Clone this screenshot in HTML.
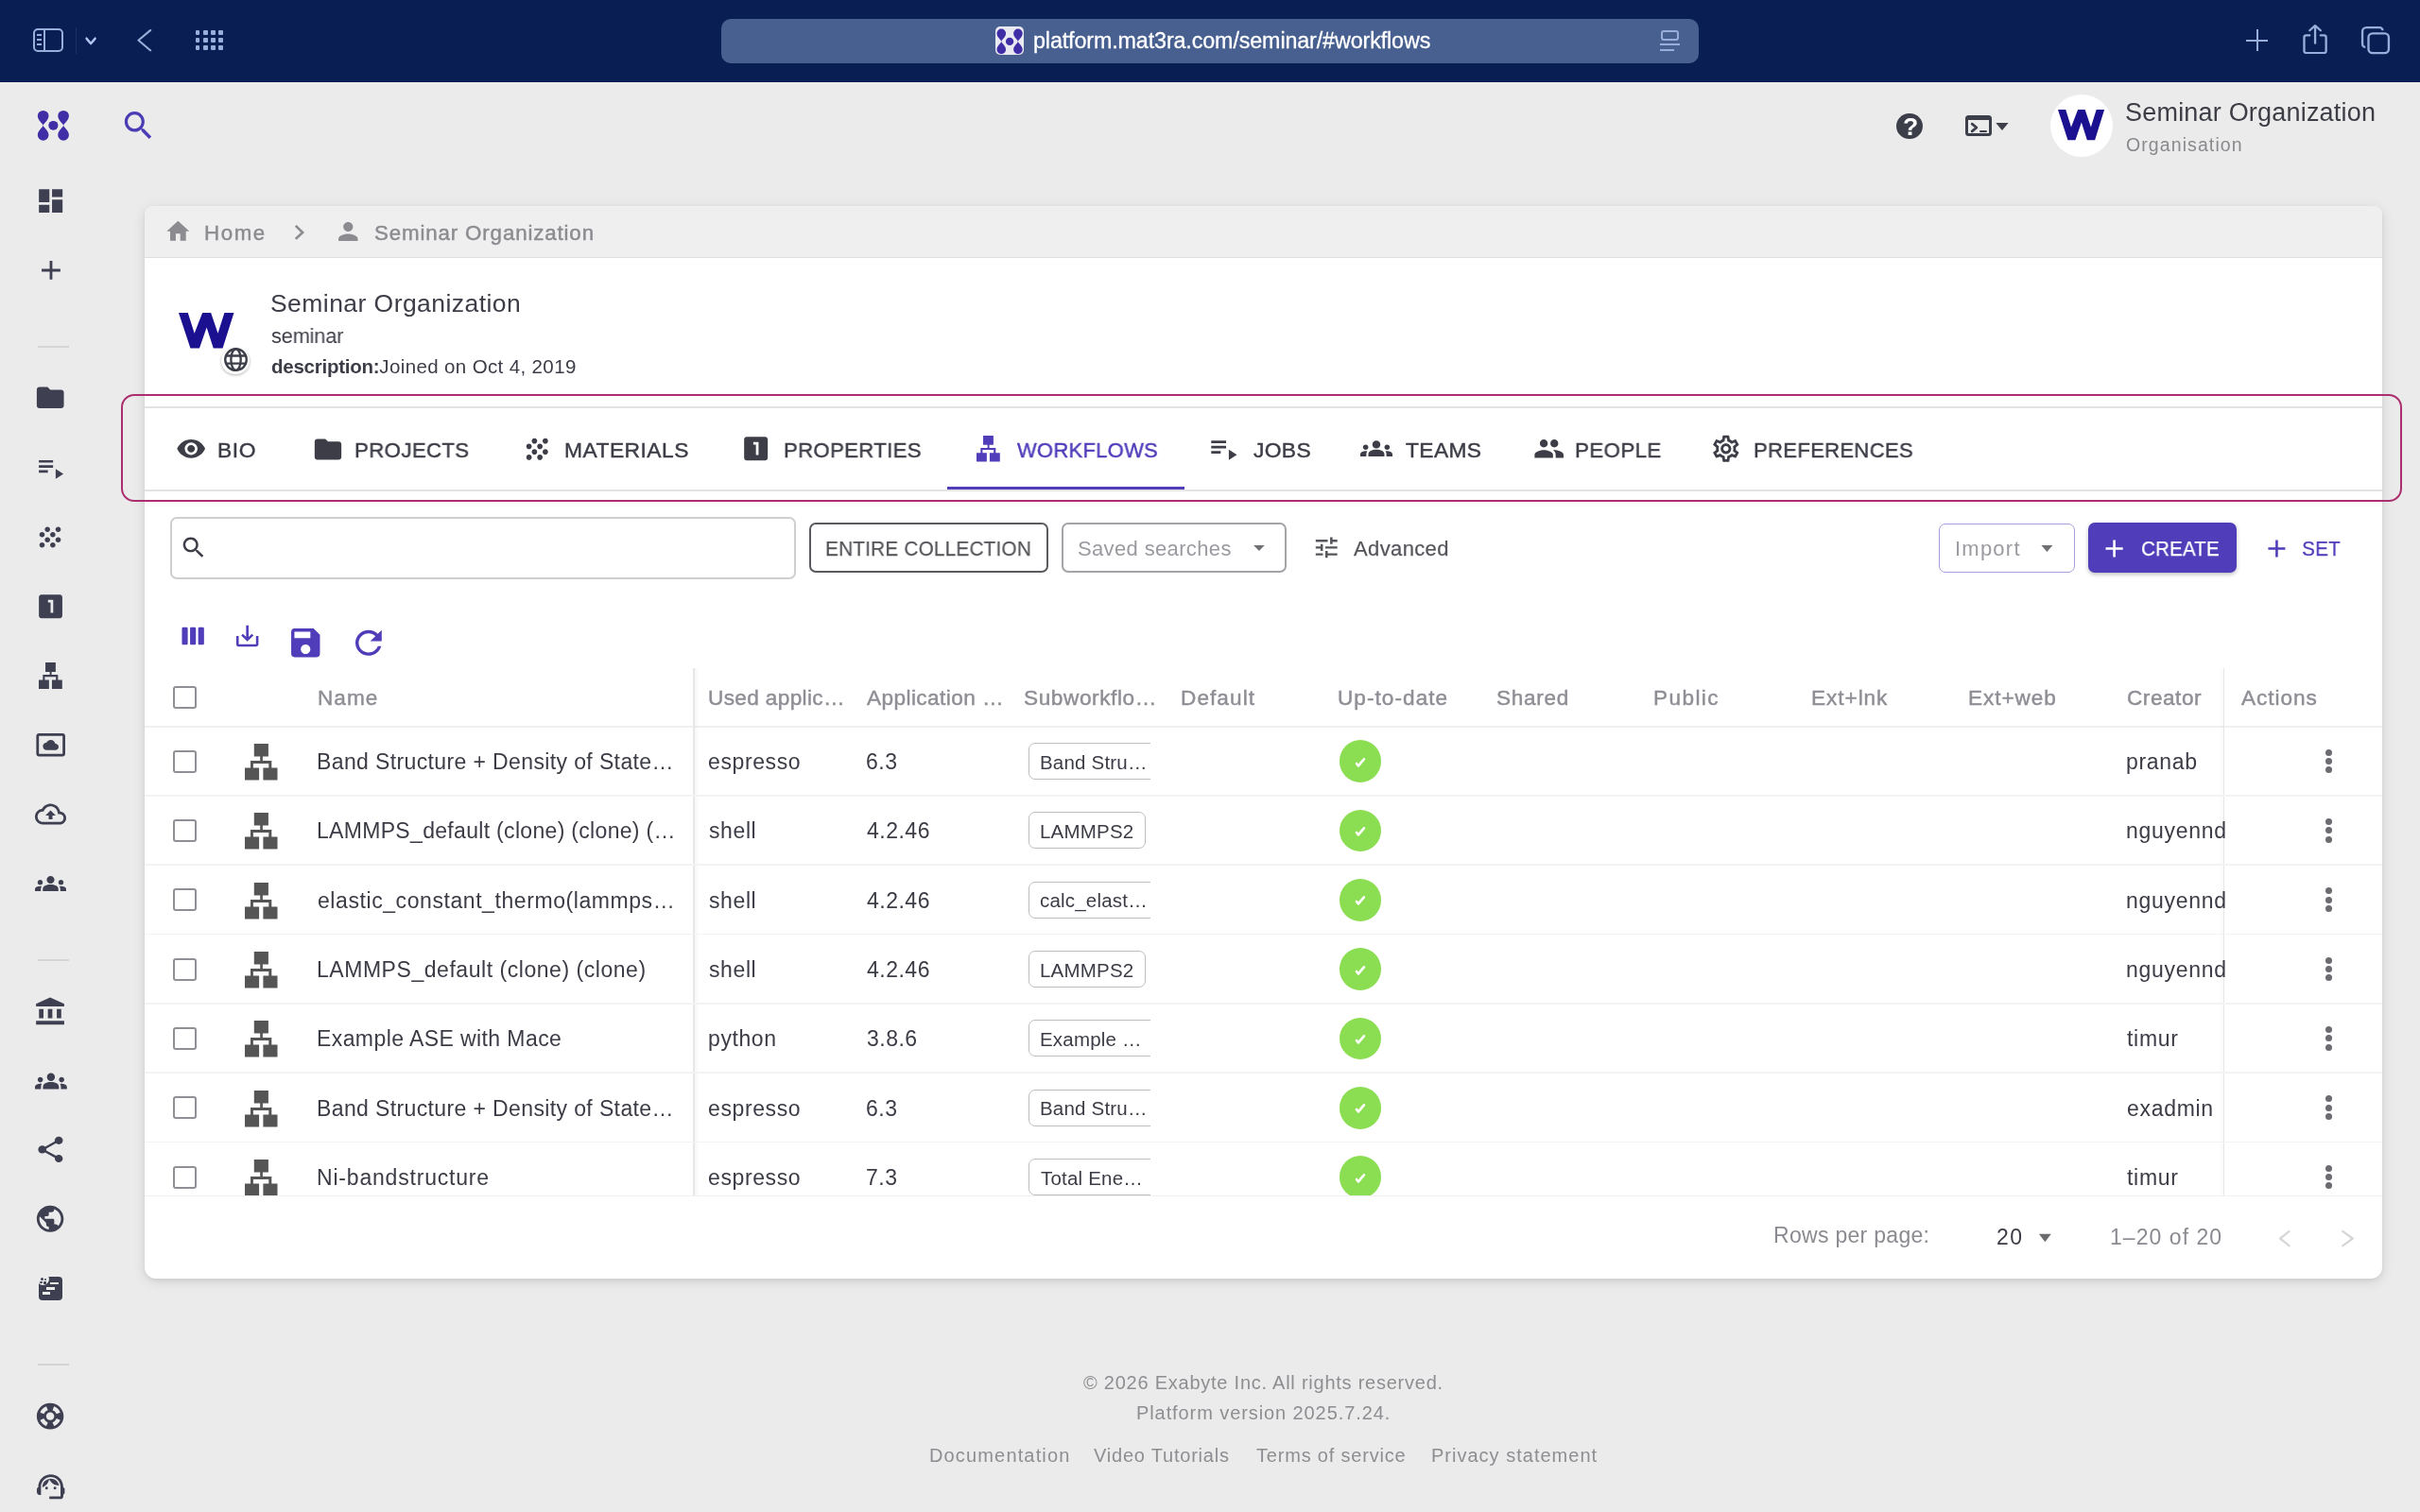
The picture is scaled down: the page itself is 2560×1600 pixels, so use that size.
<!DOCTYPE html><html><head><meta charset="utf-8"><title>Seminar Organization - Workflows</title><style>
html,body{margin:0;padding:0;width:2560px;height:1600px;overflow:hidden;background:#ebebeb;font-family:"Liberation Sans",sans-serif;}
.t{position:absolute;white-space:pre;will-change:transform;}.b{position:absolute;box-sizing:border-box;}.i{position:absolute;overflow:visible;}
.m{-webkit-text-stroke:0.25px currentColor;}.m2{-webkit-text-stroke:0.45px currentColor;}
</style></head><body>
<div class="b" style="left:0.00px;top:0.00px;width:2560.00px;height:87.00px;background:#091e52"></div>
<div class="b" style="left:35.00px;top:30.00px;width:32.00px;height:25.00px;border:2px solid #9aaedb;border-radius:5px"></div>
<div class="b" style="left:46.00px;top:31.00px;width:2.00px;height:23.00px;background:#9aaedb"></div>
<div class="b" style="left:39.00px;top:36.00px;width:5.00px;height:1.60px;background:#9aaedb"></div>
<div class="b" style="left:39.00px;top:41.00px;width:5.00px;height:1.60px;background:#9aaedb"></div>
<div class="b" style="left:39.00px;top:46.00px;width:5.00px;height:1.60px;background:#9aaedb"></div>
<div class="b" style="left:79.50px;top:29.00px;width:1.00px;height:28.00px;background:#1d3063"></div>
<svg class="i" style="left:90.22px;top:38.56px;width:12.16px;height:8.89px;" viewBox="0 0 16 10" preserveAspectRatio="none"><path d="M2 2 L8 8 L14 2" fill="none" stroke="#b4c6f2" stroke-width="3" stroke-linecap="round" stroke-linejoin="round"/></svg>
<svg class="i" style="left:142.69px;top:29.62px;width:18.46px;height:25.35px;" viewBox="0 0 16 26" preserveAspectRatio="none"><path d="M14 2 L3 13 L14 24" fill="none" stroke="#9aaedb" stroke-width="2" stroke-linecap="round" stroke-linejoin="round"/></svg>
<div class="b" style="left:206.60px;top:32.00px;width:4.80px;height:4.80px;background:#9aaedb;border-radius:1px"></div>
<div class="b" style="left:214.80px;top:32.00px;width:4.80px;height:4.80px;background:#9aaedb;border-radius:1px"></div>
<div class="b" style="left:223.00px;top:32.00px;width:4.80px;height:4.80px;background:#9aaedb;border-radius:1px"></div>
<div class="b" style="left:231.20px;top:32.00px;width:4.80px;height:4.80px;background:#9aaedb;border-radius:1px"></div>
<div class="b" style="left:206.60px;top:40.20px;width:4.80px;height:4.80px;background:#9aaedb;border-radius:1px"></div>
<div class="b" style="left:214.80px;top:40.20px;width:4.80px;height:4.80px;background:#9aaedb;border-radius:1px"></div>
<div class="b" style="left:223.00px;top:40.20px;width:4.80px;height:4.80px;background:#9aaedb;border-radius:1px"></div>
<div class="b" style="left:231.20px;top:40.20px;width:4.80px;height:4.80px;background:#9aaedb;border-radius:1px"></div>
<div class="b" style="left:206.60px;top:48.40px;width:4.80px;height:4.80px;background:#9aaedb;border-radius:1px"></div>
<div class="b" style="left:214.80px;top:48.40px;width:4.80px;height:4.80px;background:#9aaedb;border-radius:1px"></div>
<div class="b" style="left:223.00px;top:48.40px;width:4.80px;height:4.80px;background:#9aaedb;border-radius:1px"></div>
<div class="b" style="left:231.20px;top:48.40px;width:4.80px;height:4.80px;background:#9aaedb;border-radius:1px"></div>
<div class="b" style="left:763.00px;top:20.00px;width:1034.00px;height:46.60px;background:#48608f;border-radius:10px"></div>
<div class="b" style="left:1053.00px;top:28.00px;width:30.00px;height:30.00px;background:#e9e9f2;border-radius:5px"></div>
<svg class="i" style="left:1053.29px;top:28.58px;width:30.22px;height:29.83px;" viewBox="0 0 24 24" preserveAspectRatio="none"><g fill="#3f2ea6"><circle cx="12" cy="12" r="3.3"/><path d="M5 12 C4.5 10.2 1.2000000000000002 8.4 1.2000000000000002 5.1 A3.8 3.8 0 0 1 8.8 5.1 C8.8 8.4 5.5 10.2 5 12Z"/><path d="M19 12 C18.5 10.2 15.2 8.4 15.2 5.1 A3.8 3.8 0 0 1 22.8 5.1 C22.8 8.4 19.5 10.2 19 12Z"/><path d="M5 12 C4.5 13.8 1.2000000000000002 15.6 1.2000000000000002 18.9 A3.8 3.8 0 0 0 8.8 18.9 C8.8 15.6 5.5 13.8 5 12Z"/><path d="M19 12 C18.5 13.8 15.2 15.6 15.2 18.9 A3.8 3.8 0 0 0 22.8 18.9 C22.8 15.6 19.5 13.8 19 12Z"/></g></svg>
<div class="t" style="left:1092.50px;top:31.95px;font-size:23.3px;line-height:23.3px;color:#ffffff;letter-spacing:-0.118px;-webkit-text-stroke:0.3px #ffffff">platform.mat3ra.com/seminar/#workflows</div>
<div class="b" style="left:1757.00px;top:32.00px;width:19.00px;height:11.00px;border:2px solid #9aaedb;border-radius:3px"></div>
<div class="b" style="left:1756.00px;top:46.00px;width:21.00px;height:2.00px;background:#9aaedb"></div>
<div class="b" style="left:1756.00px;top:52.00px;width:15.00px;height:2.00px;background:#9aaedb"></div>
<div class="b" style="left:2386.50px;top:30.60px;width:2.00px;height:23.80px;background:#9aaedb"></div>
<div class="b" style="left:2376.00px;top:41.50px;width:23.00px;height:2.00px;background:#9aaedb"></div>
<svg class="i" style="left:2433.68px;top:24.97px;width:30.14px;height:26.87px;" viewBox="0 0 26 26" preserveAspectRatio="none"><g fill="none" stroke="#9aaedb" stroke-width="2" stroke-linecap="round" stroke-linejoin="round"><path d="M8 12 H5 a2 2 0 0 0 -2 2 V28 a2 2 0 0 0 2 2 H21 a2 2 0 0 0 2 -2 V14 a2 2 0 0 0 -2 -2 H18"/><path d="M13 20 V2 M8 7 L13 2 L18 7"/></g></svg>
<svg class="i" style="left:2498.00px;top:27.80px;width:30.00px;height:29.20px;" viewBox="0 0 28 28" preserveAspectRatio="none"><g fill="none" stroke="#9aaedb" stroke-width="2.2"><rect x="7" y="7" width="20" height="20" rx="4"/><path d="M4 21 a3 3 0 0 1 -3 -3 V5 a4 4 0 0 1 4 -4 H18 a3 3 0 0 1 3 3"/></g></svg>
<svg class="i" style="left:38.26px;top:115.17px;width:36.78px;height:35.66px;" viewBox="0 0 24 24" preserveAspectRatio="none"><g fill="#3f2ea6"><circle cx="12" cy="12" r="3.3"/><path d="M5 12 C4.5 10.2 1.2000000000000002 8.4 1.2000000000000002 5.1 A3.8 3.8 0 0 1 8.8 5.1 C8.8 8.4 5.5 10.2 5 12Z"/><path d="M19 12 C18.5 10.2 15.2 8.4 15.2 5.1 A3.8 3.8 0 0 1 22.8 5.1 C22.8 8.4 19.5 10.2 19 12Z"/><path d="M5 12 C4.5 13.8 1.2000000000000002 15.6 1.2000000000000002 18.9 A3.8 3.8 0 0 0 8.8 18.9 C8.8 15.6 5.5 13.8 5 12Z"/><path d="M19 12 C18.5 13.8 15.2 15.6 15.2 18.9 A3.8 3.8 0 0 0 22.8 18.9 C22.8 15.6 19.5 13.8 19 12Z"/></g></svg>
<svg class="i" style="left:126.85px;top:113.03px;width:38.83px;height:39.79px;" viewBox="0 0 24 24" preserveAspectRatio="none"><path fill="#4a3cb5" d="M15.5 14h-.79l-.28-.27C15.41 12.59 16 11.11 16 9.5 16 5.91 13.09 3 9.5 3S3 5.91 3 9.5 5.91 16 9.5 16c1.61 0 3.09-.59 4.230-1.57l.27.28v.79l5 4.99L20.49 19l-4.99-5zm-6 0C7.01 14 5 11.99 5 9.5S7.01 5 9.5 5 14 7.01 14 9.5 11.99 14 9.5 14z"/></svg>
<div class="b" style="left:2006.00px;top:119.50px;width:28.00px;height:27.70px;background:#3c3e4a;border-radius:50%"></div>
<div class="t" style="left:2013.18px;top:120.65px;font-size:26.5px;line-height:26.5px;color:#ffffff;letter-spacing:0.000px;font-weight:700;">?</div>
<div class="b" style="left:2079.30px;top:122.40px;width:27.90px;height:21.70px;border:3px solid #3c3e4a;border-top-width:5.5px;border-radius:3.5px"></div>
<svg class="i" style="left:2084.50px;top:129.50px;width:7.10px;height:10.00px;" viewBox="0 0 7.2 10" preserveAspectRatio="none"><path d="M1.2 1.2 L6 5 L1.2 8.8" fill="none" stroke="#3c3e4a" stroke-width="2.8" stroke-linecap="round" stroke-linejoin="round"/></svg>
<div class="b" style="left:2093.50px;top:137.80px;width:8.10px;height:2.60px;background:#3c3e4a;border-radius:1px"></div>
<svg class="i" style="left:2102.39px;top:114.00px;width:31.92px;height:38.40px;" viewBox="0 0 24 24" preserveAspectRatio="none"><path fill="#3c3e48" d="M7 10l5 5 5-5z"/></svg>
<div class="b" style="left:2168.90px;top:99.70px;width:66.50px;height:66.70px;background:#ffffff;border-radius:50%"></div>
<svg class="i" style="left:2176.90px;top:115.60px;width:49.10px;height:32.20px;" viewBox="0 0 58.46 37.56" preserveAspectRatio="none"><path fill="#1b1190" d="M0 0H9.79L16.67 21.69 25.13 0H34.13L41.53 21.69 48.41 0H58.46L46.56 37.56H36.77L29.63 15.61 21.96 37.56H12.43Z"/></svg>
<div class="t" style="left:2248.37px;top:105.80px;font-size:27px;line-height:27px;color:#3c3d45;letter-spacing:0.203px;">Seminar Organization</div>
<div class="t" style="left:2248.68px;top:144.25px;font-size:19.5px;line-height:19.5px;color:#8a8a8e;letter-spacing:1.093px;">Organisation</div>
<svg class="i" style="left:36.83px;top:196.45px;width:33.33px;height:33.20px;" viewBox="0 0 24 24" preserveAspectRatio="none"><path fill="#3e4052" d="M3 13h8V3H3v10zm0 8h8v-6H3v6zm10 0h8V11h-8v10zm0-18v6h8V3h-8z"/></svg>
<svg class="i" style="left:36.53px;top:269.43px;width:33.94px;height:33.94px;" viewBox="0 0 24 24" preserveAspectRatio="none"><path fill="#3e4052" d="M19 13h-6v6h-2v-6H5v-2h6V5h2v6h6v2z"/></svg>
<div class="b" style="left:39.60px;top:366.00px;width:33.60px;height:2.00px;background:#d5d5d8"></div>
<svg class="i" style="left:36.13px;top:404.40px;width:34.44px;height:33.60px;" viewBox="0 0 24 24" preserveAspectRatio="none"><path fill="#3e4052" d="M10 4H4c-1.1 0-1.99.9-1.99 2L2 18c0 1.1.9 2 2 2h16c1.1 0 2-.9 2-2V8c0-1.1-.9-2-2-2h-8l-2-2z"/></svg>
<svg class="i" style="left:36.89px;top:478.64px;width:32.84px;height:31.84px;" viewBox="0 0 24 24" preserveAspectRatio="none"><path fill="#3e4052" d="M3 10h11v2H3zm0-4h11v2H3zm0 8h7v2H3zm13-1v8l6-4z"/></svg>
<svg class="i" style="left:36.03px;top:551.50px;width:34.05px;height:33.00px;" viewBox="0 0 24 24" preserveAspectRatio="none"><path fill="#3e4052" d="M10 12c-1.1 0-2 .9-2 2s.9 2 2 2 2-.9 2-2-.9-2-2-2zM6 8c-1.1 0-2 .9-2 2s.9 2 2 2 2-.9 2-2-.9-2-2-2zm0 8c-1.1 0-2 .9-2 2s.9 2 2 2 2-.9 2-2-.9-2-2-2zm12-8c1.1 0 2-.9 2-2s-.9-2-2-2-2 .9-2 2 .9 2 2 2zm-4 8c-1.1 0-2 .9-2 2s.9 2 2 2 2-.9 2-2-.9-2-2-2zm4-4c-1.1 0-2 .9-2 2s.9 2 2 2 2-.9 2-2-.9-2-2-2zm-4-4c-1.1 0-2 .9-2 2s.9 2 2 2 2-.9 2-2-.9-2-2-2zm-4-4c-1.1 0-2 .9-2 2s.9 2 2 2 2-.9 2-2-.9-2-2-2z"/></svg>
<svg class="i" style="left:36.87px;top:624.83px;width:33.07px;height:33.33px;" viewBox="0 0 24 24" preserveAspectRatio="none"><path fill="#3e4052" d="M19 3H5c-1.1 0-2 .9-2 2v14c0 1.1.9 2 2 2h14c1.1 0 2-.9 2-2V5c0-1.1-.9-2-2-2zm-5 14h-2V9h-2V7h4v10z"/></svg>
<svg class="i" style="left:41.00px;top:701.00px;width:24.80px;height:28.00px;" viewBox="0 0 34.5 38.5" preserveAspectRatio="none"><path fill="#3e4052" d="M9.8 0h15.1v13.6H9.8z M16.2 13.4h2.7v4.8h-2.7z M6 18h22.3v3.1H6z M6 21h2.9v4.7H6z M25.3 21h3v4.7h-3z M0 25.5h15.1v13H0z M19.4 25.5h15.1v13H19.4z"/></svg>
<svg class="i" style="left:36.61px;top:771.92px;width:33.38px;height:32.67px;" viewBox="0 0 24 24" preserveAspectRatio="none"><path fill="#3e4052" d="M9 16h6.5c1.38 0 2.5-1.12 2.5-2.5S16.88 11 15.5 11h-.05c-.24-1.69-1.69-3-3.45-3-1.4 0-2.6.83-3.16 2.02h-.16C7.17 10.18 6 11.45 6 13c0 1.66 1.34 3 3 3zM21 3H3c-1.1 0-2 .9-2 2v14c0 1.1.9 2 2 2h18c1.1 0 2-.9 2-2V5c0-1.1-.9-2-2-2zm0 16.01H3V4.99h18v14.02z"/></svg>
<svg class="i" style="left:37.00px;top:845.00px;width:33.00px;height:33.00px;" viewBox="0 0 24 24" preserveAspectRatio="none"><path fill="#3e4052" d="M19.35 10.04C18.67 6.59 15.64 4 12 4 9.11 4 6.6 5.64 5.35 8.04 2.34 8.36 0 10.91 0 14c0 3.31 2.69 6 6 6h13c2.76 0 5-2.24 5-5 0-2.64-2.05-4.78-4.65-4.96zM19 18H6c-2.21 0-4-1.79-4-4 0-2.05 1.53-3.76 3.56-3.97l1.07-.11.5-.95C8.08 7.14 9.94 6 12 6c2.62 0 4.88 1.86 5.39 4.43l.3 1.5 1.53.11c1.56.1 2.78 1.41 2.78 2.96 0 1.65-1.35 3-3 3zM8 13h2.55v3h2.9v-3H16l-4-4z"/></svg>
<svg class="i" style="left:37.00px;top:919.00px;width:33.00px;height:32.00px;" viewBox="0 0 24 24" preserveAspectRatio="none"><path fill="#3e4052" d="M12 12.75c1.63 0 3.07.39 4.24.9 1.08.48 1.76 1.56 1.76 2.73V18H6v-1.61c0-1.18.68-2.26 1.76-2.73 1.17-.52 2.61-.91 4.24-.91zM4 13c1.1 0 2-.9 2-2s-.9-2-2-2-2 .9-2 2 .9 2 2 2zm1.13 1.1c-.37-.06-.74-.1-1.13-.1-.99 0-1.93.21-2.78.58C.48 14.9 0 15.62 0 16.43V18h4.5v-1.61c0-.83.23-1.61.63-2.29zM20 13c1.1 0 2-.9 2-2s-.9-2-2-2-2 .9-2 2 .9 2 2 2zm4 3.43c0-.81-.48-1.53-1.22-1.85-.85-.37-1.79-.58-2.78-.58-.39 0-.76.04-1.13.1.4.68.63 1.46.63 2.29V18H24v-1.57zM12 6c1.66 0 3 1.34 3 3s-1.34 3-3 3-3-1.34-3-3 1.34-3 3-3z"/></svg>
<div class="b" style="left:39.70px;top:1015.00px;width:33.00px;height:2.00px;background:#d5d5d8"></div>
<svg class="i" style="left:35.36px;top:1053.62px;width:37.64px;height:33.14px;" viewBox="0 0 24 24" preserveAspectRatio="none"><path fill="#3e4052" d="M4 10v7h3v-7H4zm6 0v7h3v-7h-3zM2 22h19v-3H2v3zm14-12v7h3v-7h-3zm-4.5-9L2 6v2h19V6l-9.5-5z"/></svg>
<svg class="i" style="left:36.50px;top:1126.50px;width:33.80px;height:34.00px;" viewBox="0 0 24 24" preserveAspectRatio="none"><path fill="#3e4052" d="M12 12.75c1.63 0 3.07.39 4.24.9 1.08.48 1.76 1.56 1.76 2.73V18H6v-1.61c0-1.18.68-2.26 1.76-2.73 1.17-.52 2.61-.91 4.24-.91zM4 13c1.1 0 2-.9 2-2s-.9-2-2-2-2 .9-2 2 .9 2 2 2zm1.13 1.1c-.37-.06-.74-.1-1.13-.1-.99 0-1.93.21-2.78.58C.48 14.9 0 15.62 0 16.43V18h4.5v-1.61c0-.83.23-1.61.63-2.29zM20 13c1.1 0 2-.9 2-2s-.9-2-2-2-2 .9-2 2 .9 2 2 2zm4 3.43c0-.81-.48-1.53-1.22-1.85-.85-.37-1.79-.58-2.78-.58-.39 0-.76.04-1.13.1.4.68.63 1.46.63 2.29V18H24v-1.57zM12 6c1.66 0 3 1.34 3 3s-1.34 3-3 3-3-1.34-3-3 1.34-3 3-3z"/></svg>
<svg class="i" style="left:36.13px;top:1199.86px;width:34.93px;height:32.88px;" viewBox="0 0 24 24" preserveAspectRatio="none"><path fill="#3e4052" d="M18 16.08c-.76 0-1.44.3-1.96.77L8.91 12.7c.05-.23.09-.46.09-.7s-.04-.47-.09-.7l7.05-4.11c.54.5 1.25.81 2.04.81 1.66 0 3-1.34 3-3s-1.34-3-3-3-3 1.34-3 3c0 .24.04.47.09.7L8.04 9.81C7.5 9.31 6.79 9 6 9c-1.66 0-3 1.34-3 3s1.34 3 3 3c.79 0 1.5-.31 2.04-.81l7.12 4.16c-.05.21-.08.43-.08.65 0 1.61 1.31 2.92 2.92 2.92 1.61 0 2.92-1.31 2.92-2.92s-1.31-2.92-2.92-2.92z"/></svg>
<svg class="i" style="left:36.15px;top:1273.20px;width:34.20px;height:33.60px;" viewBox="0 0 24 24" preserveAspectRatio="none"><path fill="#3e4052" d="M12 2C6.48 2 2 6.48 2 12s4.48 10 10 10 10-4.48 10-10S17.52 2 12 2zm-1 17.93c-3.95-.49-7-3.85-7-7.930 0-.62.08-1.21.21-1.79L9 15v1c0 1.1.9 2 2 2v1.93zm6.9-2.54c-.26-.81-1-1.39-1.9-1.39h-1v-3c0-.55-.45-1-1-1H8v-2h2c.55 0 1-.45 1-1V7h2c1.1 0 2-.9 2-2v-.41c2.93 1.19 5 4.060 5 7.41 0 2.08-.8 3.97-2.1 5.39z"/></svg>
<div class="b" style="left:41.00px;top:1351.00px;width:24.90px;height:24.50px;background:#3e4052;border-radius:4px"></div>
<div class="b" style="left:53.00px;top:1356.50px;width:8.70px;height:2.80px;background:#ebebeb"></div>
<div class="b" style="left:49.00px;top:1362.00px;width:8.70px;height:2.80px;background:#ebebeb"></div>
<div class="b" style="left:45.00px;top:1367.40px;width:8.00px;height:2.80px;background:#ebebeb"></div>
<div class="b" style="left:38.50px;top:1347.00px;width:13.00px;height:13.00px;background:#ebebeb;border-radius:50%"></div>
<div class="b" style="left:42.50px;top:1351.50px;width:3.00px;height:3.00px;background:#3e4052;border-radius:50%"></div>
<div class="b" style="left:46.50px;top:1352.80px;width:2.00px;height:2.00px;background:#3e4052;border-radius:50%"></div>
<div class="b" style="left:41.50px;top:1356.00px;width:3.00px;height:2.00px;background:#3e4052;border-radius:1px"></div>
<div class="b" style="left:45.50px;top:1356.00px;width:3.00px;height:2.50px;background:#3e4052;border-radius:1px"></div>
<div class="b" style="left:39.70px;top:1443.00px;width:33.00px;height:2.00px;background:#d5d5d8"></div>
<svg class="i" style="left:36.15px;top:1481.92px;width:34.20px;height:33.36px;" viewBox="0 0 24 24" preserveAspectRatio="none"><path fill="#3e4052" d="M12 2C6.48 2 2 6.48 2 12s4.48 10 10 10 10-4.48 10-10S17.52 2 12 2zm7.46 7.12-2.78 1.15c-.51-1.36-1.58-2.44-2.95-2.94l1.15-2.78c2.1.8 3.77 2.47 4.580 4.57zM12 15c-1.66 0-3-1.34-3-3s1.34-3 3-3 3 1.34 3 3-1.34 3-3 3zM9.13 4.54l1.17 2.78c-1.38.5-2.47 1.59-2.98 2.97L4.54 9.13c.81-2.11 2.48-3.78 4.59-4.59zM4.54 14.87l2.78-1.15c.51 1.38 1.59 2.46 2.97 2.96l-1.17 2.78c-2.1-.81-3.77-2.48-4.58-4.59zm10.34 4.59-1.15-2.78c1.37-.51 2.45-1.59 2.95-2.97l2.78 1.17c-.81 2.1-2.48 3.77-4.58 4.58z"/></svg>
<svg class="i" style="left:35.55px;top:1555.67px;width:35.40px;height:34.67px;" viewBox="0 0 24 24" preserveAspectRatio="none"><path fill="#3e4052" d="M21 12.22C21 6.73 16.74 3 12 3c-4.69 0-9 3.65-9 9.28-.6.34-1 .98-1 1.72v2c0 1.1.9 2 2 2h1v-6.1c0-3.87 3.13-7 7-7s7 3.13 7 7V19h-8v2h8c1.1 0 2-.9 2-2v-1.22c.59-.31 1-.92 1-1.64v-2.3c0-.7-.41-1.31-1-1.62zM9 12a1 1 0 1 0 0 2a1 1 0 1 0 0-2zm6 0a1 1 0 1 0 0 2a1 1 0 1 0 0-2zM18 11.03C17.52 8.18 15.04 6 12.05 6c-3.03 0-6.29 2.51-6.03 6.45 2.47-1.01 4.33-3.21 4.86-5.89 1.31 2.63 4 4.44 7.12 4.47z"/></svg>
<div class="b" style="left:153.00px;top:217.70px;width:2367.00px;height:1135.30px;background:#ffffff;border-radius:9px 9px 12px 12px;box-shadow:0 3px 14px rgba(0,0,0,0.11),0 2px 4px rgba(0,0,0,0.06)"></div>
<div class="b" style="left:153.00px;top:217.70px;width:2367.00px;height:55.30px;background:#efefef;border-radius:9px 9px 0 0;border-bottom:1px solid #dedede"></div>
<svg class="i" style="left:174.21px;top:230.29px;width:28.68px;height:29.65px;" viewBox="0 0 24 24" preserveAspectRatio="none"><path fill="#8b8b90" d="M10 20v-6h4v6h5v-8h3L12 3 2 12h3v8z"/></svg>
<div class="t m2" style="left:215.67px;top:235.55px;font-size:22.3px;line-height:22.3px;color:#8b8b90;letter-spacing:1.578px;">Home</div>
<svg class="i" style="left:299.98px;top:229.55px;width:33.04px;height:31.80px;" viewBox="0 0 24 24" preserveAspectRatio="none"><path fill="#8b8b90" d="M10 6 8.59 7.41 13.17 12l-4.58 4.59L10 18l6-6z"/></svg>
<svg class="i" style="left:352.90px;top:230.00px;width:30.60px;height:30.00px;" viewBox="0 0 24 24" preserveAspectRatio="none"><path fill="#8b8b90" d="M12 12c2.21 0 4-1.79 4-4s-1.79-4-4-4-4 1.79-4 4 1.79 4 4 4zm0 2c-2.67 0-8 1.34-8 4v2h16v-2c0-2.66-5.33-4-8-4z"/></svg>
<div class="t m2" style="left:395.99px;top:235.55px;font-size:22.3px;line-height:22.3px;color:#8b8b90;letter-spacing:0.863px;">Seminar Organization</div>
<svg class="i" style="left:189.26px;top:330.85px;width:58.46px;height:37.56px;" viewBox="0 0 58.46 37.56" preserveAspectRatio="none"><path fill="#1b1190" d="M0 0H9.79L16.67 21.69 25.13 0H34.13L41.53 21.69 48.41 0H58.46L46.56 37.56H36.77L29.63 15.61 21.96 37.56H12.43Z"/></svg>
<div class="b" style="left:234.00px;top:367.90px;width:30.00px;height:28.30px;background:#ffffff;border-radius:50%;box-shadow:0 1px 3px rgba(0,0,0,0.30)"></div>
<svg class="i" style="left:235.77px;top:367.27px;width:27.05px;height:27.16px;" viewBox="0 0 24 24" preserveAspectRatio="none"><g fill="none" stroke="#3c3e48" stroke-width="2.1"><circle cx="12" cy="12" r="10"/><ellipse cx="12" cy="12" rx="4.6" ry="10"/><path d="M2.6 8.4H21.4M2.6 15.6H21.4"/></g></svg>
<div class="t" style="left:286.30px;top:307.65px;font-size:26.5px;line-height:26.5px;color:#3c3d47;letter-spacing:0.444px;">Seminar Organization</div>
<div class="t" style="left:286.89px;top:345.30px;font-size:22px;line-height:22px;color:#3c3d47;letter-spacing:-0.150px;transform:scaleX(0.9886);transform-origin:0.61px 0;">seminar</div>
<div class="t" style="left:286.66px;top:377.65px;font-size:20.5px;line-height:20.5px;color:#3c3d47;"><span style="font-weight:700;letter-spacing:-0.25px">description:</span><span style="letter-spacing:0.37px">Joined on Oct 4, 2019</span></div>
<div class="b" style="left:153.00px;top:430.00px;width:2367.00px;height:2.00px;background:#e3e3e3"></div>
<div class="b" style="left:153.00px;top:517.50px;width:2367.00px;height:2.00px;background:#e3e3e3"></div>
<div class="b" style="left:1002.00px;top:514.80px;width:251.00px;height:3.70px;background:#4f3dba"></div>
<svg class="i" style="left:185.65px;top:459.06px;width:32.40px;height:31.68px;" viewBox="0 0 24 24" preserveAspectRatio="none"><path fill="#3c3d47" d="M12 4.5C7 4.5 2.73 7.61 1 12c1.73 4.39 6 7.5 11 7.5s9.27-3.11 11-7.5c-1.730-4.39-6-7.5-11-7.5zM12 17c-2.76 0-5-2.24-5-5s2.24-5 5-5 5 2.24 5 5-2.24 5-5 5zm0-8c-1.66 0-3 1.34-3 3s1.34 3 3 3 3-1.34 3-3-1.34-3-3-3z"/></svg>
<div class="t m2" style="left:230.43px;top:465.30px;font-size:22.8px;line-height:22.8px;color:#3c3d47;letter-spacing:0.642px;">BIO</div>
<svg class="i" style="left:329.87px;top:458.50px;width:33.96px;height:33.00px;" viewBox="0 0 24 24" preserveAspectRatio="none"><path fill="#3c3d47" d="M10 4H4c-1.1 0-1.99.9-1.99 2L2 18c0 1.1.9 2 2 2h16c1.1 0 2-.9 2-2V8c0-1.1-.9-2-2-2h-8l-2-2z"/></svg>
<div class="t m2" style="left:375.43px;top:465.30px;font-size:22.8px;line-height:22.8px;color:#3c3d47;letter-spacing:0.350px;transform:scaleX(0.9765);transform-origin:1.87px 0;">PROJECTS</div>
<svg class="i" style="left:551.25px;top:457.75px;width:34.50px;height:34.50px;" viewBox="0 0 24 24" preserveAspectRatio="none"><path fill="#3c3d47" d="M10 12c-1.1 0-2 .9-2 2s.9 2 2 2 2-.9 2-2-.9-2-2-2zM6 8c-1.1 0-2 .9-2 2s.9 2 2 2 2-.9 2-2-.9-2-2-2zm0 8c-1.1 0-2 .9-2 2s.9 2 2 2 2-.9 2-2-.9-2-2-2zm12-8c1.1 0 2-.9 2-2s-.9-2-2-2-2 .9-2 2 .9 2 2 2zm-4 8c-1.1 0-2 .9-2 2s.9 2 2 2 2-.9 2-2-.9-2-2-2zm4-4c-1.1 0-2 .9-2 2s.9 2 2 2 2-.9 2-2-.9-2-2-2zm-4-4c-1.1 0-2 .9-2 2s.9 2 2 2 2-.9 2-2-.9-2-2-2zm-4-4c-1.1 0-2 .9-2 2s.9 2 2 2 2-.9 2-2-.9-2-2-2z"/></svg>
<div class="t m2" style="left:596.73px;top:465.30px;font-size:22.8px;line-height:22.8px;color:#3c3d47;letter-spacing:0.486px;">MATERIALS</div>
<svg class="i" style="left:783.33px;top:458.33px;width:33.33px;height:33.33px;" viewBox="0 0 24 24" preserveAspectRatio="none"><path fill="#3c3d47" d="M19 3H5c-1.1 0-2 .9-2 2v14c0 1.1.9 2 2 2h14c1.1 0 2-.9 2-2V5c0-1.1-.9-2-2-2zm-5 14h-2V9h-2V7h4v10z"/></svg>
<div class="t m2" style="left:829.13px;top:465.30px;font-size:22.8px;line-height:22.8px;color:#3c3d47;letter-spacing:0.350px;transform:scaleX(0.9715);transform-origin:1.87px 0;">PROPERTIES</div>
<svg class="i" style="left:1032.50px;top:461.00px;width:24.80px;height:27.60px;" viewBox="0 0 34.5 38.5" preserveAspectRatio="none"><path fill="#4f3dba" d="M9.8 0h15.1v13.6H9.8z M16.2 13.4h2.7v4.8h-2.7z M6 18h22.3v3.1H6z M6 21h2.9v4.7H6z M25.3 21h3v4.7h-3z M0 25.5h15.1v13H0z M19.4 25.5h15.1v13H19.4z"/></svg>
<div class="t m2" style="left:1075.80px;top:465.30px;font-size:22.8px;line-height:22.8px;color:#4f3dba;letter-spacing:0.350px;transform:scaleX(0.9613);transform-origin:0.10px 0;">WORKFLOWS</div>
<svg class="i" style="left:1277.31px;top:457.76px;width:34.36px;height:32.96px;" viewBox="0 0 24 24" preserveAspectRatio="none"><path fill="#3c3d47" d="M3 10h11v2H3zm0-4h11v2H3zm0 8h7v2H3zm13-1v8l6-4z"/></svg>
<div class="t m2" style="left:1325.94px;top:465.30px;font-size:22.8px;line-height:22.8px;color:#3c3d47;letter-spacing:0.351px;">JOBS</div>
<svg class="i" style="left:1439.00px;top:458.30px;width:34.00px;height:33.20px;" viewBox="0 0 24 24" preserveAspectRatio="none"><path fill="#3c3d47" d="M12 12.75c1.63 0 3.07.39 4.24.9 1.08.48 1.76 1.56 1.76 2.73V18H6v-1.61c0-1.18.68-2.26 1.76-2.73 1.17-.52 2.61-.91 4.24-.91zM4 13c1.1 0 2-.9 2-2s-.9-2-2-2-2 .9-2 2 .9 2 2 2zm1.13 1.1c-.37-.06-.74-.1-1.13-.1-.99 0-1.93.21-2.78.58C.48 14.9 0 15.62 0 16.43V18h4.5v-1.61c0-.83.23-1.61.63-2.29zM20 13c1.1 0 2-.9 2-2s-.9-2-2-2-2 .9-2 2 .9 2 2 2zm4 3.43c0-.81-.48-1.53-1.22-1.85-.85-.37-1.79-.58-2.78-.58-.39 0-.76.04-1.13.1.4.68.63 1.46.63 2.29V18H24v-1.57zM12 6c1.66 0 3 1.34 3 3s-1.34 3-3 3-3-1.34-3-3 1.34-3 3-3z"/></svg>
<div class="t m2" style="left:1486.99px;top:465.30px;font-size:22.8px;line-height:22.8px;color:#3c3d47;letter-spacing:0.379px;">TEAMS</div>
<svg class="i" style="left:1621.51px;top:458.00px;width:33.38px;height:33.60px;" viewBox="0 0 24 24" preserveAspectRatio="none"><path fill="#3c3d47" d="M16 11c1.66 0 2.99-1.34 2.99-3S17.66 5 16 5c-1.66 0-3 1.34-3 3s1.34 3 3 3zm-8 0c1.66 0 2.99-1.34 2.99-3S9.66 5 8 5C6.34 5 5 6.34 5 8s1.34 3 3 3zm0 2c-2.33 0-7 1.17-7 3.5V19h14v-2.5c0-2.33-4.67-3.5-7-3.5zm8 0c-.29 0-.62.02-.97.05 1.16.84 1.97 1.97 1.97 3.45V19h6v-2.5c0-2.33-4.67-3.5-7-3.5z"/></svg>
<div class="t m2" style="left:1666.13px;top:465.30px;font-size:22.8px;line-height:22.8px;color:#3c3d47;letter-spacing:0.350px;transform:scaleX(0.9818);transform-origin:1.87px 0;">PEOPLE</div>
<svg class="i" style="left:1809.41px;top:457.70px;width:33.67px;height:33.60px;" viewBox="0 0 24 24" preserveAspectRatio="none"><path fill="#3c3d47" d="M19.43 12.98c.04-.32.07-.64.07-.98 0-.34-.03-.66-.07-.98l2.11-1.65c.19-.15.24-.42.12-.64l-2-3.46c-.09-.16-.26-.25-.44-.25-.06 0-.12.01-.17.03l-2.49 1c-.52-.4-1.08-.73-1.69-.98l-.38-2.65C14.46 2.18 14.25 2 14 2h-4c-.25 0-.46.18-.49.42l-.38 2.650c-.61.25-1.17.59-1.69.98l-2.49-1c-.06-.02-.12-.03-.18-.03-.17 0-.34.09-.43.25l-2 3.46c-.13.22-.07.49.12.64l2.11 1.65c-.04.32-.07.65-.07.98 0 .33.03.66.07.98l-2.11 1.65c-.19.15-.24.42-.12.64l2 3.46c.09.16.26.25.44.25.06 0 .12-.01.17-.03l2.49-1c.52.4 1.08.73 1.69.98l.38 2.65c.03.24.24.42.49.42h4c.25 0 .46-.18.49-.42l.38-2.65c.61-.25 1.17-.59 1.69-.98l2.49 1c.06.02.12.03.18.03.17 0 .34-.09.43-.25l2-3.46c.12-.22.07-.49-.12-.64l-2.11-1.65zm-1.98-1.71c.04.31.05.52.05.73 0 .21-.02.43-.05.73l-.14 1.13.89.7 1.08.84-.7 1.21-1.27-.51-1.04-.42-.9.68c-.43.32-.84.56-1.25.73l-1.06.43-.16 1.13-.2 1.35h-1.4l-.19-1.35-.16-1.13-1.06-.43c-.43-.18-.83-.41-1.23-.71l-.91-.7-1.06.43-1.27.51-.7-1.21 1.08-.84.89-.7-.14-1.13c-.03-.31-.05-.54-.05-.74s.02-.43.05-.73l.14-1.13-.89-.7-1.08-.84.7-1.21 1.27.51 1.04.42.9-.68c.43-.32.84-.56 1.25-.73l1.06-.43.16-1.13.2-1.35h1.39l.19 1.35.16 1.13 1.06.43c.43.18.83.41 1.23.71l.91.7 1.06-.43 1.27-.51.7 1.21-1.07.85-.89.7.14 1.13zM12 8c-2.21 0-4 1.79-4 4s1.79 4 4 4 4-1.79 4-4-1.79-4-4-4zm0 6c-1.1 0-2-.9-2-2s.9-2 2-2 2 .9 2 2-.9 2-2 2z"/></svg>
<div class="t m2" style="left:1855.13px;top:465.30px;font-size:22.8px;line-height:22.8px;color:#3c3d47;letter-spacing:0.350px;transform:scaleX(0.9661);transform-origin:1.87px 0;">PREFERENCES</div>
<div class="b" style="left:128.00px;top:417.20px;width:2412.50px;height:114.30px;border:2.8px solid #ab2f6f;border-radius:14px"></div>
<div class="b" style="left:180.40px;top:547.40px;width:661.30px;height:65.30px;border:2px solid #cfcfcf;border-radius:7px"></div>
<svg class="i" style="left:189.70px;top:565.08px;width:29.64px;height:28.95px;" viewBox="0 0 24 24" preserveAspectRatio="none"><path fill="#3c3d47" d="M15.5 14h-.79l-.28-.27C15.41 12.59 16 11.11 16 9.5 16 5.91 13.09 3 9.5 3S3 5.91 3 9.5 5.91 16 9.5 16c1.61 0 3.09-.59 4.230-1.57l.27.28v.79l5 4.99L20.49 19l-4.99-5zm-6 0C7.01 14 5 11.99 5 9.5S7.01 5 9.5 5 14 7.01 14 9.5 11.99 14 9.5 14z"/></svg>
<div class="b" style="left:856.40px;top:553.40px;width:252.30px;height:52.60px;border:2px solid #5a5a5f;border-radius:7px"></div>
<div class="t m" style="left:873.20px;top:569.70px;font-size:22px;line-height:22px;color:#55555a;letter-spacing:0.250px;transform:scaleX(0.9409);transform-origin:1.80px 0;">ENTIRE COLLECTION</div>
<div class="b" style="left:1123.20px;top:553.40px;width:238.10px;height:52.60px;border:2px solid #a3a3a8;border-radius:7px"></div>
<div class="t" style="left:1140.40px;top:570.00px;font-size:22px;line-height:22px;color:#9a9aa0;letter-spacing:0.356px;">Saved searches</div>
<svg class="i" style="left:1317.78px;top:565.00px;width:27.84px;height:28.80px;" viewBox="0 0 24 24" preserveAspectRatio="none"><path fill="#707075" d="M7 10l5 5 5-5z"/></svg>
<svg class="i" style="left:1388.08px;top:565.40px;width:30.53px;height:28.80px;" viewBox="0 0 24 24" preserveAspectRatio="none"><path fill="#55555b" d="M3 17v2h6v-2H3zM3 5v2h10V5H3zm10 16v-2h8v-2h-8v-2h-2v6h2zM7 9v2H3v2h4v2h2V9H7zm14 4v-2H11v2h10zm-6-4h2V7h4V5h-4V3h-2v6z"/></svg>
<div class="t m" style="left:1431.96px;top:570.00px;font-size:22px;line-height:22px;color:#55555b;letter-spacing:0.373px;">Advanced</div>
<div class="b" style="left:2051.30px;top:554.00px;width:144.00px;height:52.10px;border:1.5px solid #a59ddc;border-radius:7px"></div>
<div class="t" style="left:2067.67px;top:570.10px;font-size:22px;line-height:22px;color:#9a9aa0;letter-spacing:1.229px;">Import</div>
<svg class="i" style="left:2150.60px;top:562.80px;width:28.80px;height:33.60px;" viewBox="0 0 24 24" preserveAspectRatio="none"><path fill="#707075" d="M7 10l5 5 5-5z"/></svg>
<div class="b" style="left:2209.00px;top:553.40px;width:156.70px;height:53.10px;background:#4f3dba;border-radius:7px;box-shadow:0 2px 4px rgba(0,0,0,0.25)"></div>
<svg class="i" style="left:2220.80px;top:565.17px;width:31.20px;height:30.86px;" viewBox="0 0 24 24" preserveAspectRatio="none"><path fill="#ffffff" d="M19 13h-6v6h-2v-6H5v-2h6V5h2v6h6v2z"/></svg>
<div class="t m" style="left:2264.86px;top:570.25px;font-size:22.5px;line-height:22.5px;color:#ffffff;letter-spacing:0.250px;transform:scaleX(0.9093);transform-origin:1.14px 0;">CREATE</div>
<svg class="i" style="left:2392.97px;top:565.17px;width:30.86px;height:30.86px;" viewBox="0 0 24 24" preserveAspectRatio="none"><path fill="#4f3dba" d="M19 13h-6v6h-2v-6H5v-2h6V5h2v6h6v2z"/></svg>
<div class="t m" style="left:2435.38px;top:570.25px;font-size:22.5px;line-height:22.5px;color:#4f3dba;letter-spacing:0.250px;transform:scaleX(0.9199);transform-origin:1.02px 0;">SET</div>
<svg class="i" style="left:189.54px;top:657.26px;width:29.52px;height:31.89px;" viewBox="0 0 24 24" preserveAspectRatio="none"><path fill="#4f3dba" d="M6 5H3c-.55 0-1 .45-1 1v12c0 .55.45 1 1 1h3c.55 0 1-.45 1-1V6c0-.55-.45-1-1-1zm14 0h-3c-.55 0-1 .45-1 1v12c0 .55.45 1 1 1h3c.55 0 1-.45 1-1V6c0-.55-.45-1-1-1zm-7 0h-3c-.55 0-1 .45-1 1v12c0 .55.45 1 1 1h3c.55 0 1-.45 1-1V6c0-.55-.45-1-1-1z"/></svg>
<svg class="i" style="left:245.88px;top:657.93px;width:31.33px;height:30.13px;" viewBox="0 0 24 24" preserveAspectRatio="none"><path fill="#4f3dba" d="M19 12v7H5v-7H3v7c0 1.1.9 2 2 2h14c1.1 0 2-.9 2-2v-7h-2zm-6 .67l2.59-2.58L17 11.5l-5 5-5-5 1.41-1.41L11 12.67V3h2z"/></svg>
<svg class="i" style="left:302.93px;top:659.73px;width:40.53px;height:40.53px;" viewBox="0 0 24 24" preserveAspectRatio="none"><path fill="#4f3dba" d="M17 3H5c-1.11 0-2 .9-2 2v14c0 1.1.89 2 2 2h14c1.1 0 2-.9 2-2V7l-4-4zm-5 16c-1.66 0-3-1.34-3-3s1.34-3 3-3 3 1.34 3 3-1.34 3-3 3zm3-10H5V5h10v4z"/></svg>
<svg class="i" style="left:369.23px;top:659.55px;width:41.73px;height:40.50px;" viewBox="0 0 24 24" preserveAspectRatio="none"><path fill="#4f3dba" d="M17.65 6.35C16.2 4.9 14.21 4 12 4c-4.42 0-7.99 3.58-7.99 8s3.57 8 7.99 8c3.73 0 6.84-2.55 7.73-6h-2.08c-.82 2.33-3.04 4-5.65 4-3.31 0-6-2.69-6-6s2.69-6 6-6c1.66 0 3.14.69 4.22 1.78L13 11h7V4l-2.35 2.35z"/></svg>
<div class="b" style="left:153.00px;top:768.30px;width:2367.00px;height:1.30px;background:#f0f0f0"></div>
<div class="b" style="left:733.20px;top:706.50px;width:2.00px;height:559.50px;background:#e7e7e7"></div>
<div class="b" style="left:735.20px;top:706.50px;width:5.30px;height:559.50px;background:linear-gradient(90deg,rgba(0,0,0,0.035),rgba(0,0,0,0))"></div>
<div class="b" style="left:2351.80px;top:706.50px;width:1.40px;height:559.50px;background:#e6e6e6"></div>
<div class="b" style="left:2346.00px;top:706.50px;width:5.80px;height:559.50px;background:linear-gradient(270deg,rgba(0,0,0,0.025),rgba(0,0,0,0))"></div>
<div class="b" style="left:182.50px;top:726.30px;width:25.50px;height:23.90px;border:2.5px solid #8f8f95;border-radius:3px"></div>
<div class="t m2" style="left:336.05px;top:727.90px;font-size:22.6px;line-height:22.6px;color:#8e8e95;letter-spacing:1.024px;">Name</div>
<div class="t m2" style="left:748.66px;top:727.90px;font-size:22.6px;line-height:22.6px;color:#8e8e95;letter-spacing:0.357px;">Used applic…</div>
<div class="t m2" style="left:917.36px;top:727.90px;font-size:22.6px;line-height:22.6px;color:#8e8e95;letter-spacing:0.423px;">Application …</div>
<div class="t m2" style="left:1082.57px;top:727.90px;font-size:22.6px;line-height:22.6px;color:#8e8e95;letter-spacing:0.590px;">Subworkflo…</div>
<div class="t m2" style="left:1248.75px;top:727.90px;font-size:22.6px;line-height:22.6px;color:#8e8e95;letter-spacing:1.069px;">Default</div>
<div class="t m2" style="left:1415.46px;top:727.90px;font-size:22.6px;line-height:22.6px;color:#8e8e95;letter-spacing:1.041px;">Up-to-date</div>
<div class="t m2" style="left:1582.97px;top:727.90px;font-size:22.6px;line-height:22.6px;color:#8e8e95;letter-spacing:0.701px;">Shared</div>
<div class="t m2" style="left:1748.55px;top:727.90px;font-size:22.6px;line-height:22.6px;color:#8e8e95;letter-spacing:1.399px;">Public</div>
<div class="t m2" style="left:1915.55px;top:727.90px;font-size:22.6px;line-height:22.6px;color:#8e8e95;letter-spacing:0.947px;">Ext+lnk</div>
<div class="t m2" style="left:2081.75px;top:727.90px;font-size:22.6px;line-height:22.6px;color:#8e8e95;letter-spacing:0.915px;">Ext+web</div>
<div class="t m2" style="left:2249.65px;top:727.90px;font-size:22.6px;line-height:22.6px;color:#8e8e95;letter-spacing:0.527px;">Creator</div>
<div class="t m2" style="left:2370.96px;top:727.90px;font-size:22.6px;line-height:22.6px;color:#8e8e95;letter-spacing:0.958px;">Actions</div>
<div style="position:absolute;left:153px;top:770px;width:2367px;height:496px;overflow:hidden">
<div style="position:absolute;left:-153px;top:-770px;width:2560px;height:1600px">
<div class="b" style="left:153.00px;top:841.13px;width:2367.00px;height:1.40px;background:#f3f3f3"></div>
<div class="b" style="left:182.50px;top:793.66px;width:25.50px;height:24.00px;border:2.5px solid #8f8f95;border-radius:3px"></div>
<svg class="i" style="left:259.30px;top:787.06px;width:34.50px;height:38.50px;" viewBox="0 0 34.5 38.5" preserveAspectRatio="none"><path fill="#555555" d="M9.8 0h15.1v13.6H9.8z M16.2 13.4h2.7v4.8h-2.7z M6 18h22.3v3.1H6z M6 21h2.9v4.7H6z M25.3 21h3v4.7h-3z M0 25.5h15.1v13H0z M19.4 25.5h15.1v13H19.4z"/></svg>
<div class="t" style="left:335.31px;top:795.00px;font-size:23px;line-height:23px;color:#3b3c45;letter-spacing:0.379px;">Band Structure + Density of State…</div>
<div class="t" style="left:749.42px;top:795.00px;font-size:23px;line-height:23px;color:#3b3c45;letter-spacing:0.600px;">espresso</div>
<div class="t" style="left:916.23px;top:795.00px;font-size:23px;line-height:23px;color:#3b3c45;letter-spacing:0.500px;">6.3</div>
<div style="position:absolute;left:1080px;top:769.00px;width:137px;height:73.33px;overflow:hidden">
<div class="b" style="left:7.8px;top:17.16px;width:150px;height:39px;border:1.5px solid #bdbdbd;border-radius:7px"></div>
</div>
<div class="t" style="left:1099.52px;top:796.75px;font-size:20.5px;line-height:20.5px;color:#3b3c45;letter-spacing:0.200px;">Band Stru…</div>
<div class="b" style="left:1416.90px;top:783.37px;width:44.40px;height:44.60px;background:#8bdd52;border-radius:50%"></div>
<svg class="i" style="left:1433px;top:800.66px;width:11px;height:11px" viewBox="0 0 12 12"><path d="M2.2 7.6 L4.3 10.2 L10.8 2.6" fill="none" stroke="#ffffff" stroke-width="2.9" stroke-linecap="round" stroke-linejoin="round"/></svg>
<div style="position:absolute;left:2240px;top:769.00px;width:115px;height:73.33px;overflow:hidden">
<div class="t" style="left:9.32px;top:26.00px;font-size:23px;line-height:23px;color:#3b3c45;letter-spacing:0.7px">pranab</div>
</div>
<div class="b" style="left:2460.00px;top:792.66px;width:7.00px;height:7.00px;background:#6b6b70;border-radius:50%"></div>
<div class="b" style="left:2460.00px;top:801.96px;width:7.00px;height:7.00px;background:#6b6b70;border-radius:50%"></div>
<div class="b" style="left:2460.00px;top:811.26px;width:7.00px;height:7.00px;background:#6b6b70;border-radius:50%"></div>
<div class="b" style="left:153.00px;top:914.46px;width:2367.00px;height:1.40px;background:#f3f3f3"></div>
<div class="b" style="left:182.50px;top:867.00px;width:25.50px;height:24.00px;border:2.5px solid #8f8f95;border-radius:3px"></div>
<svg class="i" style="left:259.30px;top:860.39px;width:34.50px;height:38.50px;" viewBox="0 0 34.5 38.5" preserveAspectRatio="none"><path fill="#555555" d="M9.8 0h15.1v13.6H9.8z M16.2 13.4h2.7v4.8h-2.7z M6 18h22.3v3.1H6z M6 21h2.9v4.7H6z M25.3 21h3v4.7h-3z M0 25.5h15.1v13H0z M19.4 25.5h15.1v13H19.4z"/></svg>
<div class="t" style="left:335.31px;top:868.33px;font-size:23px;line-height:23px;color:#3b3c45;letter-spacing:0.315px;">LAMMPS_default (clone) (clone) (…</div>
<div class="t" style="left:749.76px;top:868.33px;font-size:23px;line-height:23px;color:#3b3c45;letter-spacing:0.600px;">shell</div>
<div class="t" style="left:916.87px;top:868.33px;font-size:23px;line-height:23px;color:#3b3c45;letter-spacing:0.500px;">4.2.46</div>
<div style="position:absolute;left:1080px;top:842.33px;width:137px;height:73.33px;overflow:hidden">
<div class="b" style="left:7.8px;top:17.16px;width:124px;height:39px;border:1.5px solid #bdbdbd;border-radius:7px"></div>
</div>
<div class="t" style="left:1099.52px;top:870.08px;font-size:20.5px;line-height:20.5px;color:#3b3c45;letter-spacing:0.200px;">LAMMPS2</div>
<div class="b" style="left:1416.90px;top:856.70px;width:44.40px;height:44.60px;background:#8bdd52;border-radius:50%"></div>
<svg class="i" style="left:1433px;top:874.00px;width:11px;height:11px" viewBox="0 0 12 12"><path d="M2.2 7.6 L4.3 10.2 L10.8 2.6" fill="none" stroke="#ffffff" stroke-width="2.9" stroke-linecap="round" stroke-linejoin="round"/></svg>
<div style="position:absolute;left:2240px;top:842.33px;width:115px;height:73.33px;overflow:hidden">
<div class="t" style="left:9.27px;top:26.00px;font-size:23px;line-height:23px;color:#3b3c45;letter-spacing:0.7px">nguyennd</div>
</div>
<div class="b" style="left:2460.00px;top:866.00px;width:7.00px;height:7.00px;background:#6b6b70;border-radius:50%"></div>
<div class="b" style="left:2460.00px;top:875.29px;width:7.00px;height:7.00px;background:#6b6b70;border-radius:50%"></div>
<div class="b" style="left:2460.00px;top:884.60px;width:7.00px;height:7.00px;background:#6b6b70;border-radius:50%"></div>
<div class="b" style="left:153.00px;top:987.79px;width:2367.00px;height:1.40px;background:#f3f3f3"></div>
<div class="b" style="left:182.50px;top:940.32px;width:25.50px;height:24.00px;border:2.5px solid #8f8f95;border-radius:3px"></div>
<svg class="i" style="left:259.30px;top:933.72px;width:34.50px;height:38.50px;" viewBox="0 0 34.5 38.5" preserveAspectRatio="none"><path fill="#555555" d="M9.8 0h15.1v13.6H9.8z M16.2 13.4h2.7v4.8h-2.7z M6 18h22.3v3.1H6z M6 21h2.9v4.7H6z M25.3 21h3v4.7h-3z M0 25.5h15.1v13H0z M19.4 25.5h15.1v13H19.4z"/></svg>
<div class="t" style="left:336.22px;top:941.66px;font-size:23px;line-height:23px;color:#3b3c45;letter-spacing:0.574px;">elastic_constant_thermo(lammps…</div>
<div class="t" style="left:749.76px;top:941.66px;font-size:23px;line-height:23px;color:#3b3c45;letter-spacing:0.600px;">shell</div>
<div class="t" style="left:916.87px;top:941.66px;font-size:23px;line-height:23px;color:#3b3c45;letter-spacing:0.500px;">4.2.46</div>
<div style="position:absolute;left:1080px;top:915.66px;width:137px;height:73.33px;overflow:hidden">
<div class="b" style="left:7.8px;top:17.16px;width:150px;height:39px;border:1.5px solid #bdbdbd;border-radius:7px"></div>
</div>
<div class="t" style="left:1100.33px;top:943.41px;font-size:20.5px;line-height:20.5px;color:#3b3c45;letter-spacing:0.200px;">calc_elast…</div>
<div class="b" style="left:1416.90px;top:930.02px;width:44.40px;height:44.60px;background:#8bdd52;border-radius:50%"></div>
<svg class="i" style="left:1433px;top:947.32px;width:11px;height:11px" viewBox="0 0 12 12"><path d="M2.2 7.6 L4.3 10.2 L10.8 2.6" fill="none" stroke="#ffffff" stroke-width="2.9" stroke-linecap="round" stroke-linejoin="round"/></svg>
<div style="position:absolute;left:2240px;top:915.66px;width:115px;height:73.33px;overflow:hidden">
<div class="t" style="left:9.27px;top:26.00px;font-size:23px;line-height:23px;color:#3b3c45;letter-spacing:0.7px">nguyennd</div>
</div>
<div class="b" style="left:2460.00px;top:939.32px;width:7.00px;height:7.00px;background:#6b6b70;border-radius:50%"></div>
<div class="b" style="left:2460.00px;top:948.62px;width:7.00px;height:7.00px;background:#6b6b70;border-radius:50%"></div>
<div class="b" style="left:2460.00px;top:957.92px;width:7.00px;height:7.00px;background:#6b6b70;border-radius:50%"></div>
<div class="b" style="left:153.00px;top:1061.12px;width:2367.00px;height:1.40px;background:#f3f3f3"></div>
<div class="b" style="left:182.50px;top:1013.65px;width:25.50px;height:24.00px;border:2.5px solid #8f8f95;border-radius:3px"></div>
<svg class="i" style="left:259.30px;top:1007.05px;width:34.50px;height:38.50px;" viewBox="0 0 34.5 38.5" preserveAspectRatio="none"><path fill="#555555" d="M9.8 0h15.1v13.6H9.8z M16.2 13.4h2.7v4.8h-2.7z M6 18h22.3v3.1H6z M6 21h2.9v4.7H6z M25.3 21h3v4.7h-3z M0 25.5h15.1v13H0z M19.4 25.5h15.1v13H19.4z"/></svg>
<div class="t" style="left:335.31px;top:1014.99px;font-size:23px;line-height:23px;color:#3b3c45;letter-spacing:0.543px;">LAMMPS_default (clone) (clone)</div>
<div class="t" style="left:749.76px;top:1014.99px;font-size:23px;line-height:23px;color:#3b3c45;letter-spacing:0.600px;">shell</div>
<div class="t" style="left:916.87px;top:1014.99px;font-size:23px;line-height:23px;color:#3b3c45;letter-spacing:0.500px;">4.2.46</div>
<div style="position:absolute;left:1080px;top:988.99px;width:137px;height:73.33px;overflow:hidden">
<div class="b" style="left:7.8px;top:17.16px;width:124px;height:39px;border:1.5px solid #bdbdbd;border-radius:7px"></div>
</div>
<div class="t" style="left:1099.52px;top:1016.74px;font-size:20.5px;line-height:20.5px;color:#3b3c45;letter-spacing:0.200px;">LAMMPS2</div>
<div class="b" style="left:1416.90px;top:1003.36px;width:44.40px;height:44.60px;background:#8bdd52;border-radius:50%"></div>
<svg class="i" style="left:1433px;top:1020.65px;width:11px;height:11px" viewBox="0 0 12 12"><path d="M2.2 7.6 L4.3 10.2 L10.8 2.6" fill="none" stroke="#ffffff" stroke-width="2.9" stroke-linecap="round" stroke-linejoin="round"/></svg>
<div style="position:absolute;left:2240px;top:988.99px;width:115px;height:73.33px;overflow:hidden">
<div class="t" style="left:9.27px;top:26.00px;font-size:23px;line-height:23px;color:#3b3c45;letter-spacing:0.7px">nguyennd</div>
</div>
<div class="b" style="left:2460.00px;top:1012.65px;width:7.00px;height:7.00px;background:#6b6b70;border-radius:50%"></div>
<div class="b" style="left:2460.00px;top:1021.95px;width:7.00px;height:7.00px;background:#6b6b70;border-radius:50%"></div>
<div class="b" style="left:2460.00px;top:1031.25px;width:7.00px;height:7.00px;background:#6b6b70;border-radius:50%"></div>
<div class="b" style="left:153.00px;top:1134.45px;width:2367.00px;height:1.40px;background:#f3f3f3"></div>
<div class="b" style="left:182.50px;top:1086.98px;width:25.50px;height:24.00px;border:2.5px solid #8f8f95;border-radius:3px"></div>
<svg class="i" style="left:259.30px;top:1080.38px;width:34.50px;height:38.50px;" viewBox="0 0 34.5 38.5" preserveAspectRatio="none"><path fill="#555555" d="M9.8 0h15.1v13.6H9.8z M16.2 13.4h2.7v4.8h-2.7z M6 18h22.3v3.1H6z M6 21h2.9v4.7H6z M25.3 21h3v4.7h-3z M0 25.5h15.1v13H0z M19.4 25.5h15.1v13H19.4z"/></svg>
<div class="t" style="left:335.31px;top:1088.32px;font-size:23px;line-height:23px;color:#3b3c45;letter-spacing:0.414px;">Example ASE with Mace</div>
<div class="t" style="left:748.92px;top:1088.32px;font-size:23px;line-height:23px;color:#3b3c45;letter-spacing:0.600px;">python</div>
<div class="t" style="left:916.52px;top:1088.32px;font-size:23px;line-height:23px;color:#3b3c45;letter-spacing:0.500px;">3.8.6</div>
<div style="position:absolute;left:1080px;top:1062.32px;width:137px;height:73.33px;overflow:hidden">
<div class="b" style="left:7.8px;top:17.16px;width:150px;height:39px;border:1.5px solid #bdbdbd;border-radius:7px"></div>
</div>
<div class="t" style="left:1099.52px;top:1090.07px;font-size:20.5px;line-height:20.5px;color:#3b3c45;letter-spacing:0.200px;">Example …</div>
<div class="b" style="left:1416.90px;top:1076.68px;width:44.40px;height:44.60px;background:#8bdd52;border-radius:50%"></div>
<svg class="i" style="left:1433px;top:1093.98px;width:11px;height:11px" viewBox="0 0 12 12"><path d="M2.2 7.6 L4.3 10.2 L10.8 2.6" fill="none" stroke="#ffffff" stroke-width="2.9" stroke-linecap="round" stroke-linejoin="round"/></svg>
<div style="position:absolute;left:2240px;top:1062.32px;width:115px;height:73.33px;overflow:hidden">
<div class="t" style="left:10.45px;top:26.00px;font-size:23px;line-height:23px;color:#3b3c45;letter-spacing:0.7px">timur</div>
</div>
<div class="b" style="left:2460.00px;top:1085.98px;width:7.00px;height:7.00px;background:#6b6b70;border-radius:50%"></div>
<div class="b" style="left:2460.00px;top:1095.28px;width:7.00px;height:7.00px;background:#6b6b70;border-radius:50%"></div>
<div class="b" style="left:2460.00px;top:1104.58px;width:7.00px;height:7.00px;background:#6b6b70;border-radius:50%"></div>
<div class="b" style="left:153.00px;top:1207.78px;width:2367.00px;height:1.40px;background:#f3f3f3"></div>
<div class="b" style="left:182.50px;top:1160.32px;width:25.50px;height:24.00px;border:2.5px solid #8f8f95;border-radius:3px"></div>
<svg class="i" style="left:259.30px;top:1153.72px;width:34.50px;height:38.50px;" viewBox="0 0 34.5 38.5" preserveAspectRatio="none"><path fill="#555555" d="M9.8 0h15.1v13.6H9.8z M16.2 13.4h2.7v4.8h-2.7z M6 18h22.3v3.1H6z M6 21h2.9v4.7H6z M25.3 21h3v4.7h-3z M0 25.5h15.1v13H0z M19.4 25.5h15.1v13H19.4z"/></svg>
<div class="t" style="left:335.31px;top:1161.65px;font-size:23px;line-height:23px;color:#3b3c45;letter-spacing:0.379px;">Band Structure + Density of State…</div>
<div class="t" style="left:749.42px;top:1161.65px;font-size:23px;line-height:23px;color:#3b3c45;letter-spacing:0.600px;">espresso</div>
<div class="t" style="left:916.23px;top:1161.65px;font-size:23px;line-height:23px;color:#3b3c45;letter-spacing:0.500px;">6.3</div>
<div style="position:absolute;left:1080px;top:1135.65px;width:137px;height:73.33px;overflow:hidden">
<div class="b" style="left:7.8px;top:17.16px;width:150px;height:39px;border:1.5px solid #bdbdbd;border-radius:7px"></div>
</div>
<div class="t" style="left:1099.52px;top:1163.40px;font-size:20.5px;line-height:20.5px;color:#3b3c45;letter-spacing:0.200px;">Band Stru…</div>
<div class="b" style="left:1416.90px;top:1150.02px;width:44.40px;height:44.60px;background:#8bdd52;border-radius:50%"></div>
<svg class="i" style="left:1433px;top:1167.32px;width:11px;height:11px" viewBox="0 0 12 12"><path d="M2.2 7.6 L4.3 10.2 L10.8 2.6" fill="none" stroke="#ffffff" stroke-width="2.9" stroke-linecap="round" stroke-linejoin="round"/></svg>
<div style="position:absolute;left:2240px;top:1135.65px;width:115px;height:73.33px;overflow:hidden">
<div class="t" style="left:9.82px;top:26.00px;font-size:23px;line-height:23px;color:#3b3c45;letter-spacing:0.7px">exadmin</div>
</div>
<div class="b" style="left:2460.00px;top:1159.32px;width:7.00px;height:7.00px;background:#6b6b70;border-radius:50%"></div>
<div class="b" style="left:2460.00px;top:1168.62px;width:7.00px;height:7.00px;background:#6b6b70;border-radius:50%"></div>
<div class="b" style="left:2460.00px;top:1177.91px;width:7.00px;height:7.00px;background:#6b6b70;border-radius:50%"></div>
<div class="b" style="left:153.00px;top:1281.11px;width:2367.00px;height:1.40px;background:#f3f3f3"></div>
<div class="b" style="left:182.50px;top:1233.64px;width:25.50px;height:24.00px;border:2.5px solid #8f8f95;border-radius:3px"></div>
<svg class="i" style="left:259.30px;top:1227.05px;width:34.50px;height:38.50px;" viewBox="0 0 34.5 38.5" preserveAspectRatio="none"><path fill="#555555" d="M9.8 0h15.1v13.6H9.8z M16.2 13.4h2.7v4.8h-2.7z M6 18h22.3v3.1H6z M6 21h2.9v4.7H6z M25.3 21h3v4.7h-3z M0 25.5h15.1v13H0z M19.4 25.5h15.1v13H19.4z"/></svg>
<div class="t" style="left:335.31px;top:1234.98px;font-size:23px;line-height:23px;color:#3b3c45;letter-spacing:0.806px;">Ni-bandstructure</div>
<div class="t" style="left:749.42px;top:1234.98px;font-size:23px;line-height:23px;color:#3b3c45;letter-spacing:0.600px;">espresso</div>
<div class="t" style="left:916.22px;top:1234.98px;font-size:23px;line-height:23px;color:#3b3c45;letter-spacing:0.500px;">7.3</div>
<div style="position:absolute;left:1080px;top:1208.98px;width:137px;height:73.33px;overflow:hidden">
<div class="b" style="left:7.8px;top:17.16px;width:150px;height:39px;border:1.5px solid #bdbdbd;border-radius:7px"></div>
</div>
<div class="t" style="left:1100.74px;top:1236.73px;font-size:20.5px;line-height:20.5px;color:#3b3c45;letter-spacing:0.200px;">Total Ene…</div>
<div class="b" style="left:1416.90px;top:1223.35px;width:44.40px;height:44.60px;background:#8bdd52;border-radius:50%"></div>
<svg class="i" style="left:1433px;top:1240.64px;width:11px;height:11px" viewBox="0 0 12 12"><path d="M2.2 7.6 L4.3 10.2 L10.8 2.6" fill="none" stroke="#ffffff" stroke-width="2.9" stroke-linecap="round" stroke-linejoin="round"/></svg>
<div style="position:absolute;left:2240px;top:1208.98px;width:115px;height:73.33px;overflow:hidden">
<div class="t" style="left:10.45px;top:26.00px;font-size:23px;line-height:23px;color:#3b3c45;letter-spacing:0.7px">timur</div>
</div>
<div class="b" style="left:2460.00px;top:1232.64px;width:7.00px;height:7.00px;background:#6b6b70;border-radius:50%"></div>
<div class="b" style="left:2460.00px;top:1241.94px;width:7.00px;height:7.00px;background:#6b6b70;border-radius:50%"></div>
<div class="b" style="left:2460.00px;top:1251.24px;width:7.00px;height:7.00px;background:#6b6b70;border-radius:50%"></div>
</div></div>
<div class="b" style="left:153.00px;top:1265.00px;width:2367.00px;height:1.30px;background:#f0f0f0"></div>
<div class="t" style="left:1875.71px;top:1296.30px;font-size:23px;line-height:23px;color:#8a8a90;letter-spacing:0.300px;">Rows per page:</div>
<div class="t" style="left:2111.84px;top:1297.90px;font-size:23px;line-height:23px;color:#3b3c45;letter-spacing:1.472px;">20</div>
<svg class="i" style="left:2147.94px;top:1289.20px;width:30.72px;height:40.32px;" viewBox="0 0 24 24" preserveAspectRatio="none"><path fill="#6b6b70" d="M7 10l5 5 5-5z"/></svg>
<div class="t" style="left:2231.55px;top:1297.90px;font-size:23px;line-height:23px;color:#8a8a90;letter-spacing:1.049px;">1–20 of 20</div>
<svg class="i" style="left:2409.65px;top:1301.70px;width:13.71px;height:17.20px;" viewBox="0 0 13 18" preserveAspectRatio="none"><path d="M11 1 L2 9 L11 17" fill="none" stroke="#d6d6d8" stroke-width="2.2" stroke-linecap="round" stroke-linejoin="round"/></svg>
<svg class="i" style="left:2475.54px;top:1301.70px;width:15.13px;height:17.20px;" viewBox="0 0 13 18" preserveAspectRatio="none"><path d="M2 1 L11 9 L2 17" fill="none" stroke="#d6d6d8" stroke-width="2.2" stroke-linecap="round" stroke-linejoin="round"/></svg>
<div class="t" style="left:1145.90px;top:1453.30px;font-size:20px;line-height:20px;color:#8e8e92;letter-spacing:0.760px;">© 2026 Exabyte Inc. All rights reserved.</div>
<div class="t" style="left:1202.36px;top:1484.80px;font-size:20px;line-height:20px;color:#8e8e92;letter-spacing:0.911px;">Platform version 2025.7.24.</div>
<div class="t" style="left:982.56px;top:1529.80px;font-size:20px;line-height:20px;color:#8e8e92;letter-spacing:1.151px;">Documentation</div>
<div class="t" style="left:1157.11px;top:1529.80px;font-size:20px;line-height:20px;color:#8e8e92;letter-spacing:0.787px;">Video Tutorials</div>
<div class="t" style="left:1328.55px;top:1529.80px;font-size:20px;line-height:20px;color:#8e8e92;letter-spacing:0.809px;">Terms of service</div>
<div class="t" style="left:1513.66px;top:1529.80px;font-size:20px;line-height:20px;color:#8e8e92;letter-spacing:1.009px;">Privacy statement</div>
</body></html>
